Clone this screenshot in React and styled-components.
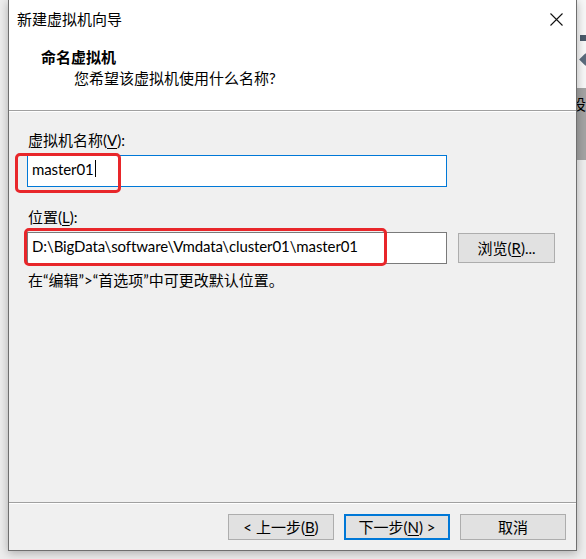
import React from "react";
import styled, { createGlobalStyle } from "styled-components";

const GlobalStyle = createGlobalStyle`
  html, body { margin: 0; padding: 0; }
  body {
    width: 586px;
    height: 559px;
    overflow: hidden;
    background: #ececec;
    font-family: "Lato", "Noto Sans CJK SC", sans-serif;
    font-size: 15px;
    color: #000;
  }
`;

const Page = styled.div`
  display: flex;
  width: 586px;
  height: 559px;
  background: #ededed;
`;

const LeftGutter = styled.div`
  width: 8px;
  flex: none;
`;

const Dialog = styled.div`
  position: relative;
  z-index: 1;
  box-sizing: border-box;
  width: 569px;
  height: 551px;
  flex: none;
  display: flex;
  flex-direction: column;
  background: #f0f0f0;
  border: 1px solid #6f6f6f;
  border-top: none;
  box-shadow: 0 2px 9px rgba(0, 0, 0, 0.28);
`;

const RightEdge = styled.div`
  flex: 1;
  display: flex;
  flex-direction: column;
  overflow: hidden;
`;

const EdgeToolbar = styled.div`
  height: 88px;
  background: #f7f7f7;
  display: flex;
  flex-direction: column;
  align-items: flex-start;
  padding-left: 3px;
  gap: 14px;
  padding-top: 35px;
  box-sizing: border-box;
`;

const EdgeSquare = styled.div`
  width: 6px;
  height: 6px;
  background: #4a5a6a;
`;

const EdgeDiamond = styled.div`
  width: 9px;
  height: 9px;
  background: #5a6b7c;
  transform: rotate(45deg);
  margin-left: 1px;
`;

const EdgeGrey = styled.div`
  height: 72px;
  background: #a3a3a3;
  font-size: 15px;
  line-height: 20px;
  padding-top: 6px;
  box-sizing: border-box;
  white-space: nowrap;
  text-indent: -6px;
`;

const EdgeRest = styled.div`
  flex: 1;
  background: #eeeeee;
`;

const TitleBar = styled.div`
  height: 40px;
  flex: none;
  background: #fff;
  display: flex;
  align-items: center;
  justify-content: space-between;
  padding-left: 8px;
  padding-bottom: 2px;
  box-sizing: border-box;
`;

const TitleText = styled.span`
  line-height: 20px;
`;

const CloseBox = styled.div`
  width: 40px;
  height: 38px;
  display: flex;
  align-items: center;
  justify-content: center;
`;

const Header = styled.div`
  height: 70px;
  flex: none;
  background: #fff;
  padding: 7px 0 0 32px;
  box-sizing: border-box;
`;

const HeaderTitle = styled.div`
  font-weight: bold;
  line-height: 21px;
`;

const HeaderSub = styled.div`
  line-height: 21px;
  padding-left: 33px;
`;

const Divider = styled.div`
  height: 1px;
  flex: none;
  background: #a0a0a0;
  border-bottom: 1px solid #fff;
`;

const Body = styled.div`
  flex: 1;
  padding: 18px 0 0 18px;
  box-sizing: border-box;
  display: flex;
  flex-direction: column;
`;

const Label = styled.div`
  line-height: 20px;
  padding-left: 1px;
  margin-top: ${(p) => p.$gap || 0}px;
`;

const Field = styled.div`
  position: relative;
  margin-top: 5px;
  display: flex;
  align-items: center;
  gap: 11px;
`;

const Input = styled.div`
  position: relative;
  box-sizing: border-box;
  width: 420px;
  height: 32px;
  background: #fff;
  border: 1px solid ${(p) => (p.$focused ? "#0078d7" : "#7a7a7a")};
  padding: 0 0 5px 4px;
  display: flex;
  align-items: center;
  white-space: nowrap;
  letter-spacing: -0.1px;
`;

const Caret = styled.span`
  display: inline-block;
  width: 1px;
  height: 17px;
  background: #000;
  margin-left: 1px;
`;

const Mark = styled.div`
  position: absolute;
  box-sizing: border-box;
  border: 3px solid #e8262a;
  border-radius: 5px;
  pointer-events: none;
`;

const Button = styled.div`
  box-sizing: border-box;
  width: ${(p) => p.$w || 106}px;
  height: ${(p) => p.$h || 26}px;
  background: #e1e1e1;
  border: ${(p) => (p.$primary ? "2px solid #0078d7" : "1px solid #adadad")};
  display: flex;
  align-items: center;
  justify-content: center;
  line-height: 20px;
  white-space: nowrap;
  flex: none;
`;

const Hint = styled.div`
  margin-top: 6px;
  line-height: 20px;
  padding-left: 1px;
`;

const Footer = styled.div`
  height: 46px;
  flex: none;
  display: flex;
  justify-content: flex-end;
  align-items: flex-start;
  gap: 10px;
  padding: 10px 10px 0 0;
  box-sizing: border-box;
`;

const U = styled.span`
  text-decoration: underline;
  text-underline-offset: 2px;
`;

const CloseIcon = () => (
  <svg width="13" height="13" viewBox="0 0 13 13">
    <path d="M0.5 0.5 L12.5 12.5 M12.5 0.5 L0.5 12.5" stroke="#111" strokeWidth="1.1" fill="none" />
  </svg>
);

export default function App() {
  return (
    <>
      <GlobalStyle />
      <Page>
        <LeftGutter />
        <Dialog>
          <TitleBar>
            <TitleText>新建虚拟机向导</TitleText>
            <CloseBox>
              <CloseIcon />
            </CloseBox>
          </TitleBar>
          <Header>
            <HeaderTitle>命名虚拟机</HeaderTitle>
            <HeaderSub>您希望该虚拟机使用什么名称?</HeaderSub>
          </Header>
          <Divider />
          <Body>
            <Label>
              虚拟机名称(<U>V</U>):
            </Label>
            <Field>
              <Input $focused>
                master01
                <Caret />
              </Input>
              <Mark style={{ left: -12, top: -2, width: 106, height: 40 }} />
            </Field>
            <Label $gap={20}>
              位置(<U>L</U>):
            </Label>
            <Field>
              <Input>D:\BigData\software\Vmdata\cluster01\master01</Input>
              <Button $w={97} $h={30}>
                浏览(<U>R</U>)...
              </Button>
              <Mark style={{ left: -3, top: -4, width: 363, height: 38 }} />
            </Field>
            <Hint>在“编辑”&gt;“首选项”中可更改默认位置。</Hint>
          </Body>
          <Divider />
          <Footer>
            <Button>
              &lt; 上一步(<U>B</U>)
            </Button>
            <Button $primary>
              下一步(<U>N</U>) &gt;
            </Button>
            <Button>取消</Button>
          </Footer>
        </Dialog>
        <RightEdge>
          <EdgeToolbar>
            <EdgeSquare />
            <EdgeDiamond />
          </EdgeToolbar>
          <EdgeGrey>设</EdgeGrey>
          <EdgeRest />
        </RightEdge>
      </Page>
    </>
  );
}
